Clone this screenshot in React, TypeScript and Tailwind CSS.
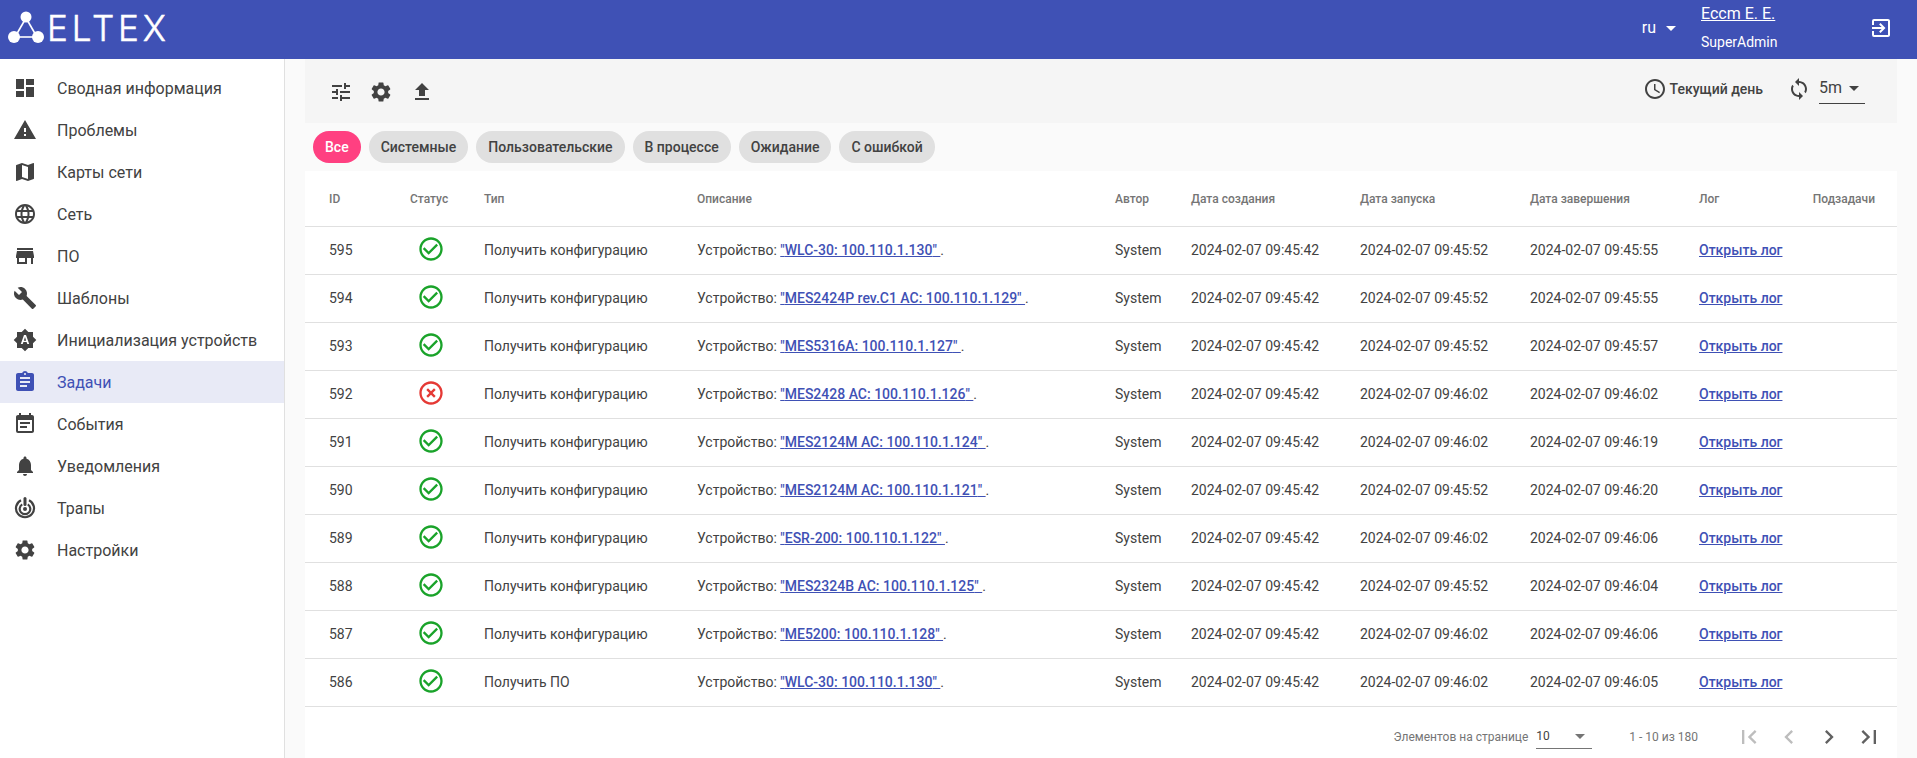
import React from "react";
import {
  MdDashboard, MdWarning, MdMap, MdLanguage, MdStore, MdBuild, MdBrightnessAuto, MdAssignment, MdEventNote,
  MdNotifications, MdSettings, MdTune, MdFileUpload, MdAccessTime, MdSync, MdExitToApp,
  MdFirstPage, MdChevronLeft, MdChevronRight, MdLastPage, MdCheckCircleOutline, MdHighlightOff, MdArrowDropDown,
} from "react-icons/md";

function TrapIcon({ size = 24, className = "" }: { size?: number; className?: string }) {
  return (
    <svg width={size} height={size} viewBox="0 0 24 24" className={className} fill="none" stroke="currentColor">
      <path d="M8 4.2A9 9 0 1 0 16 4.2" strokeWidth="2.2" />
      <path d="M9.2 8.4A5.3 5.3 0 1 0 14.8 8.4" strokeWidth="2.2" />
      <circle cx="12" cy="13" r="2" fill="currentColor" stroke="none" />
      <path d="M12 2.4V8.4" strokeWidth="3" strokeLinecap="round" />
    </svg>
  );
}

const nav: [any, string][] = [
  [MdDashboard, "Сводная информация"],
  [MdWarning, "Проблемы"],
  [MdMap, "Карты сети"],
  [MdLanguage, "Сеть"],
  [MdStore, "ПО"],
  [MdBuild, "Шаблоны"],
  [MdBrightnessAuto, "Инициализация устройств"],
  [MdAssignment, "Задачи"],
  [MdEventNote, "События"],
  [MdNotifications, "Уведомления"],
  [TrapIcon, "Трапы"],
  [MdSettings, "Настройки"],
];

const chips = ["Все", "Системные", "Пользовательские", "В процессе", "Ожидание", "С ошибкой"];

const rows: [number, boolean, string, string, string, string][] = [
  [595, true, "Получить конфигурацию", "WLC-30: 100.110.1.130", "09:45:52", "09:45:55"],
  [594, true, "Получить конфигурацию", "MES2424P rev.C1 AC: 100.110.1.129", "09:45:52", "09:45:55"],
  [593, true, "Получить конфигурацию", "MES5316A: 100.110.1.127", "09:45:52", "09:45:57"],
  [592, false, "Получить конфигурацию", "MES2428 AC: 100.110.1.126", "09:46:02", "09:46:02"],
  [591, true, "Получить конфигурацию", "MES2124M AC: 100.110.1.124", "09:46:02", "09:46:19"],
  [590, true, "Получить конфигурацию", "MES2124M AC: 100.110.1.121", "09:45:52", "09:46:20"],
  [589, true, "Получить конфигурацию", "ESR-200: 100.110.1.122", "09:46:02", "09:46:06"],
  [588, true, "Получить конфигурацию", "MES2324B AC: 100.110.1.125", "09:45:52", "09:46:04"],
  [587, true, "Получить конфигурацию", "ME5200: 100.110.1.128", "09:46:02", "09:46:06"],
  [586, true, "Получить ПО", "WLC-30: 100.110.1.130", "09:46:02", "09:46:05"],
];

const grid = "grid grid-cols-[98px_81px_213px_418px_76px_169px_170px_169px_113px_85px]";

function Logo() {
  return (
    <svg width="172" height="59" viewBox="0 0 172 59" className="block">
      <g stroke="#fff" strokeWidth="1.6" fill="none">
        <line x1="26" y1="18" x2="15" y2="37" />
        <line x1="26" y1="18" x2="37" y2="37" />
        <line x1="15" y1="37" x2="37" y2="37" />
      </g>
      <circle cx="26" cy="17" r="5.5" fill="#fff" />
      <circle cx="14" cy="37" r="6" fill="#fff" />
      <circle cx="38" cy="37" r="6" fill="#fff" />
      <text x="47" y="40.7" fill="#fff" stroke="#fff" strokeWidth="0.5" fontFamily="Inter, sans-serif" fontWeight="300" fontSize="35" textLength="119" lengthAdjust="spacing">ELTEX</text>
    </svg>
  );
}

export default function App() {
  return (
    <div className="w-[1917px] h-[758px] overflow-hidden flex flex-col bg-white font-['Roboto',sans-serif] text-[#424242]">
      <header className="h-[59px] shrink-0 bg-[#3f51b5] text-white flex items-center">
        <Logo />
        <div className="ml-auto flex items-center">
          <span className="text-[16px] leading-none mb-[3px]">ru</span>
          <MdArrowDropDown size={24} className="ml-[3px] mb-[3px]" />
          <div className="ml-[18px] w-[159px] flex flex-col h-[59px]">
            <span className="text-[16px] leading-[19px] mt-[4px] underline">Eccm E. E.</span>
            <span className="text-[14px] leading-[16px] mt-[11px]">SuperAdmin</span>
          </div>
          <MdExitToApp size={24} className="mr-[24px] ml-[9px] mb-[3px]" />
        </div>
      </header>
      <div className="flex flex-1 min-h-0">
        <aside className="w-[285px] shrink-0 border-r border-[#e0e0e0] pt-[8px]">
          {nav.map(([Icon, label]) => {
            const active = label === "Задачи";
            return (
              <div key={label} className={`h-[42px] flex items-center pl-[13px] ${active ? "bg-[#e8eaf6] text-[#3f51b5]" : ""}`}>
                <Icon size={24} className={active ? "text-[#3f51b5]" : "text-[#424242]"} />
                <span className="ml-[20px] pt-[1px] text-[16px]">{label}</span>
              </div>
            );
          })}
        </aside>
        <main className="flex-1 min-w-0 bg-[#fafafa] px-[20px] flex flex-col">
          <div className="h-[64px] shrink-0 bg-[#f5f5f5] flex items-center pl-[24px] pr-[32px]">
            <MdTune size={24} className="mt-[2px]" />
            <MdSettings size={24} className="ml-[16px] mt-[2px]" />
            <MdFileUpload size={24} className="ml-[17px] mt-[2px]" />
            <div className="ml-auto flex items-center">
              <MdAccessTime size={24} className="mb-[4px]" />
              <span className="ml-[3px] mb-[4px] text-[14px] font-medium">Текущий день</span>
              <MdSync size={24} className="ml-[24px] mb-[4px]" />
              <div className="ml-[8px] mb-[2px] w-[46px] h-[28px] border-b border-[#424242] flex items-center justify-between pb-[4px]">
                <span className="text-[16px]">5m</span>
                <MdArrowDropDown size={24} className="-mr-[1px]" />
              </div>
            </div>
          </div>
          <div className="h-[48px] shrink-0 flex items-center gap-[8px] pl-[8px]">
            {chips.map((c, i) => (
              <span key={c} className={`h-[32px] rounded-full px-[12px] flex items-center text-[14px] font-medium ${i === 0 ? "bg-[#ff4081] text-white" : "bg-[#e0e0e0] text-[#424242]"}`}>{c}</span>
            ))}
          </div>
          <div className="flex-1 bg-white">
            <div className={`${grid} h-[55px] items-center text-[12px] font-medium text-[#757575] border-b border-[#e0e0e0] box-content`}>
              <span className="pl-[24px]">ID</span>
              <span className="pl-[7px]">Статус</span>
              <span>Тип</span>
              <span>Описание</span>
              <span>Автор</span>
              <span>Дата создания</span>
              <span>Дата запуска</span>
              <span>Дата завершения</span>
              <span>Лог</span>
              <span className="text-right pr-[22px]">Подзадачи</span>
            </div>
            {rows.map(([id, ok, type, dev, start, end]) => (
              <div key={id} className={`${grid} h-[48px] items-center text-[14px] border-b border-[#e0e0e0]`}>
                <span className="pl-[24px]">{id}</span>
                <span className="pl-[14px] flex -mt-[3px]">
                  {ok ? <MdCheckCircleOutline size={28} className="text-[#1aa32a]" /> : <MdHighlightOff size={28} className="text-[#e53935]" />}
                </span>
                <span>{type}</span>
                <span>Устройство: <a className="text-[#3f51b5] underline font-medium">"{dev}" </a>.</span>
                <span>System</span>
                <span>2024-02-07 09:45:42</span>
                <span>2024-02-07 {start}</span>
                <span>2024-02-07 {end}</span>
                <a className="text-[#3f51b5] underline font-medium">Открыть лог</a>
                <span />
              </div>
            ))}
            <div className="h-[51px] flex items-center justify-end text-[12px] text-[#757575] pr-[14px] pt-[8px]">
              <span>Элементов на странице</span>
              <div className="ml-[8px] w-[56px] h-[24px] border-b border-[#757575] flex items-center justify-between text-[#424242]">
                <span>10</span>
                <MdArrowDropDown size={24} className="text-[#757575]" />
              </div>
              <span className="ml-[37px]">1 - 10 из 180</span>
              <div className="ml-[37px] flex items-center gap-[12px]">
                <MdFirstPage size={28} className="text-[#bdbdbd]" />
                <MdChevronLeft size={28} className="text-[#bdbdbd]" />
                <MdChevronRight size={28} className="text-[#616161]" />
                <MdLastPage size={28} className="text-[#616161]" />
              </div>
            </div>
          </div>
        </main>
      </div>
    </div>
  );
}
